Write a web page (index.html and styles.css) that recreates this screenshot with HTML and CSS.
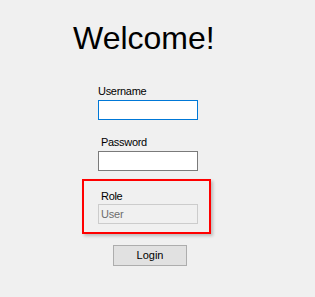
FILE: index.html
```html
<!DOCTYPE html>
<html>
<head>
<meta charset="utf-8">
<link rel="stylesheet" href="styles.css">
</head>
<body>
<div class="form">
  <h1 class="title">Welcome!</h1>
  <label class="label label-user">Username</label>
  <div class="field field-focus"></div>
  <label class="label label-pass">Password</label>
  <div class="field"></div>
  <div class="role-box">
    <label class="label label-role">Role</label>
    <div class="field field-disabled">User</div>
  </div>
  <button class="login">Login</button>
</div>
</body>
</html>
```
FILE: styles.css
```css
html, body {
  margin: 0;
  padding: 0;
  background: #f0f0f0;
}
body {
  width: 315px;
  height: 297px;
  overflow: hidden;
  font-family: "Liberation Sans", Arial, sans-serif;
}
.form {
  display: flex;
  flex-direction: column;
  align-items: flex-start;
  padding-top: 20px;
}
.title {
  margin: 0 0 0 73px;
  font-size: 32px;
  line-height: 37px;
  height: 37px;
  font-weight: normal;
  color: #000;
}
.label {
  display: block;
  font-size: 11px;
  line-height: 13px;
  height: 13px;
  letter-spacing: -0.3px;
  color: #000;
}
.label-user {
  margin: 28px 0 0 98px;
}
.label-pass {
  margin: 16px 0 0 101px;
}
.field {
  box-sizing: border-box;
  width: 100px;
  height: 20px;
  margin: 2px 0 0 98px;
  background: #fff;
  border: 1px solid #7a7a7a;
}
.field-focus {
  border-color: #0078d7;
}
.role-box {
  box-sizing: border-box;
  width: 129px;
  height: 55px;
  margin: 8px 0 0 82px;
  border: 2px solid #ff0000;
  box-shadow: 2px 2px 3px rgba(0, 0, 0, 0.22);
  padding-top: 9px;
}
.label-role {
  margin: 0 0 0 17px;
}
.field-disabled {
  margin: 1px 0 0 14px;
  height: 20px;
  background: #f0f0f0;
  border-color: #cccccc;
  color: #6d6d6d;
  font-size: 11px;
  line-height: 18px;
  padding-left: 2px;
  letter-spacing: -0.2px;
}
.login {
  box-sizing: border-box;
  width: 74px;
  height: 21px;
  margin: 11px 0 0 113px;
  padding: 0;
  background: #e1e1e1;
  border: 1px solid #adadad;
  border-radius: 0;
  font-family: "Liberation Sans", Arial, sans-serif;
  font-size: 11px;
  color: #000;
  line-height: 19px;
}
```
